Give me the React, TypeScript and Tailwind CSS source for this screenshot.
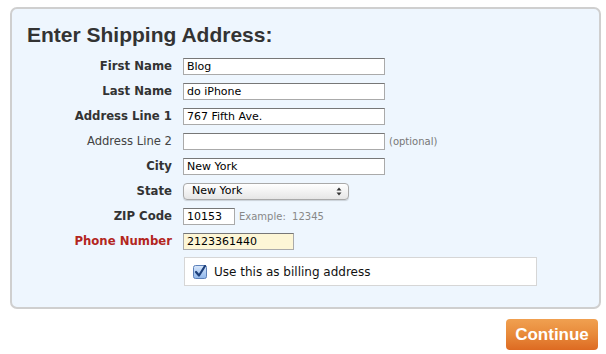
import React from 'react';

const labelFont = { fontFamily: '"DejaVu Sans", Verdana, sans-serif' };

const Field = ({ value, width, bg }: { value: string; width: string; bg?: string }) => (
  <div
    className={`${width} h-[17px] border border-[#aaa] border-t-[#777] ${bg ?? 'bg-white'} pl-[3px] text-[11px] leading-[15px] text-black`}
  >
    {value}
  </div>
);

const Row = ({
  label,
  bold = true,
  red = false,
  children,
}: {
  label: string;
  bold?: boolean;
  red?: boolean;
  children: React.ReactNode;
}) => (
  <div className="flex h-[25px] items-center">
    <div
      className={`w-[161px] pr-[1px] text-right ${
        bold ? 'text-[11.7px] font-bold' : 'text-[11.6px]'
      } ${red ? 'text-[#b3261e]' : bold ? 'text-[#333]' : 'text-[#444]'}`}
    >
      {label}
    </div>
    <div className="ml-[10px] flex items-center">{children}</div>
  </div>
);

export default function App() {
  return (
    <div className="h-[354px] w-[606px] bg-white" style={labelFont}>
      <div className="ml-[10px] pt-[7px]">
        <div className="h-[302px] w-[591px] rounded-[7px] border-2 border-[#cfcfcf] bg-[#eef6fe]">
          <h1
            className="ml-[15px] mt-[13px] text-[21px] font-bold leading-[26px] text-[#333]"
            style={{ fontFamily: '"Liberation Sans", Arial, sans-serif' }}
          >
            Enter Shipping Address:
          </h1>
          <div className="mt-[6px]">
            <Row label="First Name">
              <Field value="Blog" width="w-[202px]" />
            </Row>
            <Row label="Last Name">
              <Field value="do iPhone" width="w-[202px]" />
            </Row>
            <Row label="Address Line 1">
              <Field value="767 Fifth Ave." width="w-[202px]" />
            </Row>
            <Row label="Address Line 2" bold={false}>
              <Field value="" width="w-[202px]" />
              <span className="ml-[4px] text-[10px] text-[#777]">(optional)</span>
            </Row>
            <Row label="City">
              <Field value="New York" width="w-[202px]" />
            </Row>
            <Row label="State">
              <div className="flex h-[17px] w-[166px] items-center justify-between rounded-[4px] border border-[#a9a9a9] bg-gradient-to-b from-white to-[#e6e6e6] pl-[8px] pr-[6px] text-[11px] text-black shadow-[0_1px_1px_rgba(0,0,0,0.15)]">
                <span>New York</span>
                <svg width="6" height="9" viewBox="0 0 6 9">
                  <path d="M3 0.5 L5.5 3.5 H0.5 Z" fill="#333" />
                  <path d="M3 8.5 L5.5 5.5 H0.5 Z" fill="#333" />
                </svg>
              </div>
            </Row>
            <Row label="ZIP Code">
              <Field value="10153" width="w-[52px]" />
              <span className="ml-[4px] text-[10px] text-[#888]">Example:&nbsp; 12345</span>
            </Row>
            <Row label="Phone Number" red>
              <Field value="2123361440" width="w-[111px]" bg="bg-[#fdf6d6]" />
            </Row>
          </div>
          <div className="ml-[172px] mt-[3px] flex h-[29px] w-[353px] items-center border border-[#d6d6d6] bg-white pl-[8px]">
            <svg width="14" height="14" viewBox="0 0 14 14">
              <defs>
                <linearGradient id="cb" x1="0" y1="0" x2="0" y2="1">
                  <stop offset="0" stopColor="#d8e7fb" />
                  <stop offset="1" stopColor="#8fb6ea" />
                </linearGradient>
              </defs>
              <rect x="0.5" y="0.5" width="13" height="13" rx="2" fill="url(#cb)" stroke="#5b7fb8" />
              <path d="M3 7 L6 10.5 L12 1" fill="none" stroke="#1d3f7a" strokeWidth="2.2" strokeLinecap="round" strokeLinejoin="round" />
            </svg>
            <span className="ml-[7px] text-[12px] text-[#111]">Use this as billing address</span>
          </div>
        </div>
      </div>
      <div className="mr-[8px] mt-[10px] flex justify-end">
        <button
          className="h-[31px] w-[92px] rounded-[4px] bg-gradient-to-b from-[#f0a050] via-[#e88a3a] to-[#dd6a22] text-[17px] font-bold text-white"
          style={{ fontFamily: '"Liberation Sans", Arial, sans-serif' }}
        >
          Continue
        </button>
      </div>
    </div>
  );
}
